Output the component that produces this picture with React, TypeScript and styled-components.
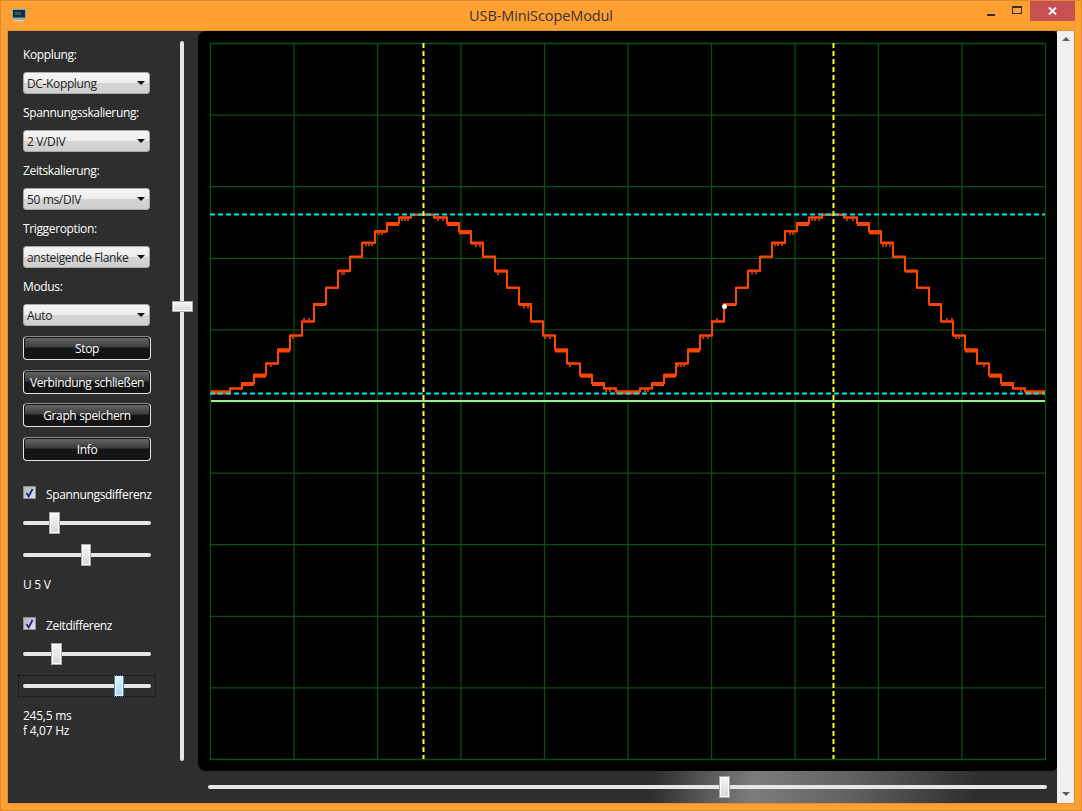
import styled, { createGlobalStyle } from "styled-components";

const GlobalStyle = createGlobalStyle`
  html, body { margin: 0; padding: 0; background: #ffa033; }
  * { box-sizing: border-box; }
`;

const Window = styled.div`
  width: 1082px;
  height: 811px;
  display: flex;
  flex-direction: column;
  background: #ffa033;
  border: 1px solid #d98c32;
  font-family: "Open Sans", "Liberation Sans", sans-serif;
  font-size: 12px;
  overflow: hidden;
`;
const TitleBar = styled.div`
  height: 30px;
  flex: none;
  display: grid;
  grid-template-columns: 1fr auto 1fr;
  align-items: start;
`;
const AppIcon = styled.svg`
  margin: 8px 0 0 11px;
`;
const WindowTitle = styled.div`
  margin-top: 5px;
  font-size: 14.5px;
  line-height: 20px;
  color: #3a3229;
  letter-spacing: -0.1px;
`;
const WindowControls = styled.div`
  justify-self: end;
  display: flex;
  margin-right: 6px;
`;
const ControlButton = styled.div<{ $close?: boolean }>`
  width: ${(p) => (p.$close ? "45px" : "26px")};
  height: 20px;
  display: flex;
  align-items: center;
  justify-content: center;
  background: ${(p) => (p.$close ? "#c75050" : "transparent")};
`;
const Body = styled.div`
  flex: 1;
  margin: 0 7px 7px;
  display: flex;
  background: #2e2e2e;
  box-shadow: 0 0 0 1px #e08f30;
  min-height: 0;
`;
const Sidebar = styled.div`
  width: 164px;
  flex: none;
  padding: 16px 0 0 15px;
  color: #fff;
  display: flex;
  flex-direction: column;
`;
const Label = styled.div`
  height: 16px;
  line-height: 16px;
  margin-bottom: 9px;
  letter-spacing: -0.36px;
`;
const Select = styled.div`
  width: 127px;
  height: 22px;
  flex: none;
  margin-bottom: 11px;
  padding: 0 4px 0 3px;
  display: flex;
  align-items: center;
  justify-content: space-between;
  border: 1px solid #a9a9a9;
  border-radius: 3px;
  color: #222;
  letter-spacing: -0.36px;
  background: linear-gradient(#f5f5f5 0%, #ececec 50%, #d4d4d4 52%, #cfcfcf 100%);
  &::after {
    content: "";
    border-left: 4px solid transparent;
    border-right: 4px solid transparent;
    border-top: 4px solid #111;
  }
`;
const Buttons = styled.div`
  display: flex;
  flex-direction: column;
  gap: 9.6px;
  margin-top: -1px;
`;
const Button = styled.div`
  width: 128px;
  height: 24px;
  padding-top: 1px;
  display: flex;
  align-items: center;
  justify-content: center;
  border: 1px solid #e4e4e4;
  border-top-color: #8a8a8a;
  border-radius: 4px;
  color: #fff;
  font-weight: 500;
  letter-spacing: -0.36px;
  box-shadow: inset 0 0 0 1px #141414;
  background: linear-gradient(#6a6a6a 0%, #3b3b3b 46%, #141414 50%, #141414 100%);
`;
const CheckRow = styled.div<{ $top: number }>`
  height: 16px;
  margin-top: ${(p) => p.$top}px;
  margin-bottom: 10px;
  padding-top: 2px;
  display: flex;
  align-items: center;
  gap: 10px;
  letter-spacing: -0.36px;
`;
const CheckBox = styled.div`
  width: 13px;
  height: 13px;
  flex: none;
  margin-top: -4px;
  border: 1px solid #8e8e8e;
  background: linear-gradient(135deg, #aeb2bf, #e2e4ea);
  display: flex;
  align-items: center;
  justify-content: center;
`;
const Slider = styled.div<{ $focused?: boolean }>`
  position: relative;
  width: 128px;
  height: 22px;
  flex: none;
  margin-bottom: 10px;
  &::before {
    content: "";
    position: absolute;
    left: 0;
    right: 0;
    top: 9px;
    height: 4px;
    border-radius: 2px;
    background: #e6e6e6;
  }
  ${(p) => p.$focused && `
    &::after {
      content: "";
      position: absolute;
      inset: 0 -5px;
      border: 1px dotted #0c0c0c;
    }
  `}
`;
const Thumb = styled.div<{ $focused?: boolean; $wide?: boolean }>`
  position: absolute;
  top: 0;
  width: ${(p) => (p.$wide ? 11 : 10)}px;
  height: 22px;
  border: 1px solid ${(p) => (p.$focused ? "#4a86b4" : "#a8a8a8")};
  box-shadow: inset 0 0 0 1px ${(p) => (p.$focused ? "#e8f6fe" : "#fff")};
  background: ${(p) =>
    p.$focused
      ? "linear-gradient(#e6f4fd, #a9d9f6)"
      : "linear-gradient(#f6f6f6, #d6d6d6)"};
`;
const Readout = styled.div<{ $top?: number }>`
  line-height: 15px;
  margin-top: ${(p) => p.$top ?? 0}px;
  letter-spacing: -0.25px;
`;
const VerticalSlider = styled.div`
  position: relative;
  width: 26px;
  flex: none;
  margin-top: 10px;
  height: 720px;
  &::before {
    content: "";
    position: absolute;
    left: 8px;
    top: 0;
    bottom: 0;
    width: 4px;
    border-radius: 2px;
    background: #e6e6e6;
  }
`;
const VerticalThumb = styled.div`
  position: absolute;
  left: 0;
  top: 260px;
  width: 21px;
  height: 11px;
  border: 1px solid #a8a8a8;
  box-shadow: inset 0 0 0 1px #fff;
  background: linear-gradient(#f6f6f6, #d6d6d6);
`;
const Main = styled.div`
  width: 859px;
  flex: none;
  display: flex;
  flex-direction: column;
`;
const ScopePanel = styled.div`
  height: 740px;
  flex: none;
  background: #000;
  border-radius: 8px 5px 5px 8px;
  overflow: hidden;
`;
const BottomBar = styled.div`
  flex: 1;
  padding: 14px 10px 0;
  background: linear-gradient(100deg, #2e2e2e 0, #2e2e2e 450px, #7c7c7c 548px, #636363 640px, #2e2e2e 770px);
`;
const BottomSlider = styled.div`
  position: relative;
  height: 4px;
  width: 839px;
  border-radius: 2px;
  background: #e6e6e6;
`;
const BottomThumb = styled(Thumb)`
  top: -9px;
  left: 511px;
  width: 11px;
`;
const ScrollBar = styled.div`
  flex: 1;
  display: flex;
  flex-direction: column;
  justify-content: space-between;
  align-items: center;
  padding: 6px 0 7px;
  background: #f0f0f0;
`;
const ScrollUp = styled.div`
  border-left: 4px solid transparent;
  border-right: 4px solid transparent;
  border-bottom: 4px solid #606060;
`;
const ScrollDown = styled.div`
  border-left: 4px solid transparent;
  border-right: 4px solid transparent;
  border-top: 4px solid #606060;
`;

type Step = [number, number, number, number[]?];

// x end, top of level, band height, glitch ticks (negative goes upward)
const TRACE: Step[] = [
  [230, 390.5, 4], [242, 387.5, 2], [254, 382, 4], [266, 373.7, 4], [278, 362.5, 2, [271]],
  [290, 348.5, 4], [302, 334.5, 2, [293]], [314, 320.5, 2, [-304, -309]], [326, 303, 3],
  [338, 286.7, 2], [350, 269.7, 2.5, [342, 344]], [362, 255.7, 2], [375, 241.7, 2, [366, 369, 372]],
  [387, 230.3, 2.5, [379, 382]], [399, 222, 4], [411, 216.5, 2, [402, 405, 408]], [434, 213.7, 2],
  [447, 216.5, 2, [438, 443]], [459, 222, 4], [471, 230.3, 4], [483, 241.7, 3, [476, 480]],
  [495, 255.7, 2], [507, 269.7, 3, [498]], [519, 286.7, 2], [531, 303, 3, [524, 528]],
  [543, 320.5, 2], [555, 334.5, 2, [545, 550]], [567, 348.5, 4], [580, 362.5, 2, [570]],
  [592, 373.7, 4], [604, 382, 4], [616, 387.5, 2, [606, 610]], [640, 390.5, 4],
  [652, 387.5, 2, [645, 648]], [664, 382, 4], [676, 373.7, 4], [688, 362.5, 2, [678, 681, 684]],
  [700, 348.5, 4], [712, 334.5, 2, [703, 708]], [724, 320.5, 2, [-717]], [736, 303, 3],
  [748, 286.7, 2], [760, 269.7, 2, [752, 756]], [772, 255.7, 2], [785, 241.7, 2, [775, 778, 782]],
  [797, 230.3, 2, [790, 793]], [809, 222, 4], [822, 216.5, 2, [812, 815, 819]], [844, 213.7, 2],
  [857, 216.5, 2, [847, 853]], [869, 222, 4], [881, 230.3, 4], [893, 241.7, 2.5, [883, 886, 890]],
  [905, 255.7, 2], [917, 269.7, 3], [929, 286.7, 2], [941, 303, 3], [953, 320.5, 2, [-947, -952]],
  [965, 334.5, 2, [956, 959]], [977, 348.5, 4], [989, 362.5, 2, [984]], [1001, 373.7, 4],
  [1013, 382, 4], [1025, 387.5, 2, [1021]], [1045, 390.5, 4],
];

const tracePath = () => {
  let d = `M211 ${TRACE[0][1] + 1}`;
  TRACE.forEach(([x, y]) => {
    d += ` V${y + 1} H${x}`;
  });
  return d;
};

const traceBands = () => {
  let from = 211;
  return TRACE.map(([to, y, h], i) => {
    const band = <rect key={i} x={from} y={y} width={to - from} height={h} fill="#ff4500" />;
    from = to;
    return band;
  });
};

const traceTicks = () => {
  let d = "";
  TRACE.forEach(([, y, h, ticks]) => {
    (ticks || []).forEach((t) => {
      d += t < 0 ? ` M${-t} ${y} v-2.5` : ` M${t} ${y + h} v2.5`;
    });
  });
  return d;
};

function ScopePlot() {
  const verticals = Array.from({ length: 11 }, (_, i) => 210.5 + i * 83.5);
  const horizontals = Array.from({ length: 11 }, (_, i) => 43.5 + i * 71.6);
  return (
    <svg width={859} height={740} viewBox="198 31 859 740" style={{ display: "block" }}>
      {verticals.map((x) => (
        <line key={x} x1={x} x2={x} y1={43} y2={759.5} stroke="#0a4f0a" strokeWidth={1.3} />
      ))}
      {horizontals.map((y) => (
        <line key={y} x1={210} x2={1045.5} y1={y} y2={y} stroke="#0a4f0a" strokeWidth={1.3} />
      ))}
      <path d={tracePath()} fill="none" stroke="#ff4500" strokeWidth={2} />
      {traceBands()}
      <path d={traceTicks()} fill="none" stroke="#ff4500" strokeWidth={1.5} />
      <line x1={211} x2={1045} y1={401} y2={401} stroke="#98ee90" strokeWidth={2} />
      <line x1={210} x2={1045} y1={214.5} y2={214.5} stroke="#00e6e6" strokeWidth={2} strokeDasharray="5 3" />
      <line x1={210} x2={1045} y1={393.5} y2={393.5} stroke="#00e6e6" strokeWidth={2} strokeDasharray="5 3" />
      <line x1={423.5} x2={423.5} y1={43} y2={759} stroke="#ffff1e" strokeWidth={2} strokeDasharray="5 3" />
      <line x1={833.5} x2={833.5} y1={43} y2={759} stroke="#ffff1e" strokeWidth={2} strokeDasharray="5 3" />
      <circle cx={724.5} cy={306.5} r={2.5} fill="#fff" />
    </svg>
  );
}

const Check = () => (
  <svg width={9} height={10} viewBox="0 0 9 10">
    <path d="M1.5 5 L3.6 8.4 L7.6 1" fill="none" stroke="#27277d" strokeWidth={1.8} />
  </svg>
);

export default function App() {
  return (
    <>
      <GlobalStyle />
      <Window>
        <TitleBar>
          <AppIcon width={14} height={13} viewBox="0 0 14 13">
            <rect x={0.5} y={0.5} width={13} height={8.5} fill="#1c2b38" stroke="#5fb4c6" />
            <rect x={3} y={3} width={6} height={3} fill="#36586b" />
            <rect x={4} y={9.5} width={6} height={1.5} fill="#9aa8ad" />
            <rect x={2} y={11} width={10} height={1.5} fill="#c6cfd2" />
          </AppIcon>
          <WindowTitle>USB-MiniScopeModul</WindowTitle>
          <WindowControls>
            <ControlButton>
              <svg width={8} height={2} viewBox="0 0 8 2" style={{ marginTop: 8 }}>
                <rect width={8} height={2} fill="#33302c" />
              </svg>
            </ControlButton>
            <ControlButton>
              <svg width={10} height={8} viewBox="0 0 10 8" style={{ marginTop: -3 }}>
                <rect x={0.5} y={0.5} width={9} height={7} fill="none" stroke="#33302c" />
                <rect x={0} y={0} width={10} height={2} fill="#33302c" />
              </svg>
            </ControlButton>
            <ControlButton $close>
              <svg width={9} height={8} viewBox="0 0 9 8">
                <path d="M1 0.5 L8 7.5 M8 0.5 L1 7.5" stroke="#fff" strokeWidth={1.9} />
              </svg>
            </ControlButton>
          </WindowControls>
        </TitleBar>
        <Body>
          <Sidebar>
            <Label>Kopplung:</Label>
            <Select>DC-Kopplung</Select>
            <Label>Spannungsskalierung:</Label>
            <Select>2 V/DIV</Select>
            <Label>Zeitskalierung:</Label>
            <Select>50 ms/DIV</Select>
            <Label>Triggeroption:</Label>
            <Select>ansteigende Flanke</Select>
            <Label>Modus:</Label>
            <Select>Auto</Select>
            <Buttons>
              <Button>Stop</Button>
              <Button>Verbindung schließen</Button>
              <Button>Graph speichern</Button>
              <Button>Info</Button>
            </Buttons>
            <CheckRow $top={25.2}>
              <CheckBox><Check /></CheckBox>
              Spannungsdifferenz
            </CheckRow>
            <Slider>
              <Thumb $wide style={{ left: 26 }} />
            </Slider>
            <Slider>
              <Thumb style={{ left: 58 }} />
            </Slider>
            <Readout $top={1}>U 5 V</Readout>
            <CheckRow $top={25}>
              <CheckBox><Check /></CheckBox>
              Zeitdifferenz
            </CheckRow>
            <Slider>
              <Thumb $wide style={{ left: 28 }} />
            </Slider>
            <Slider $focused>
              <Thumb $focused style={{ left: 91 }} />
            </Slider>
            <Readout $top={1}>245,5 ms</Readout>
            <Readout>f 4,07 Hz</Readout>
          </Sidebar>
          <VerticalSlider>
            <VerticalThumb />
          </VerticalSlider>
          <Main>
            <ScopePanel>
              <ScopePlot />
            </ScopePanel>
            <BottomBar>
              <BottomSlider>
                <BottomThumb />
              </BottomSlider>
            </BottomBar>
          </Main>
          <ScrollBar>
            <ScrollUp />
            <ScrollDown />
          </ScrollBar>
        </Body>
      </Window>
    </>
  );
}
